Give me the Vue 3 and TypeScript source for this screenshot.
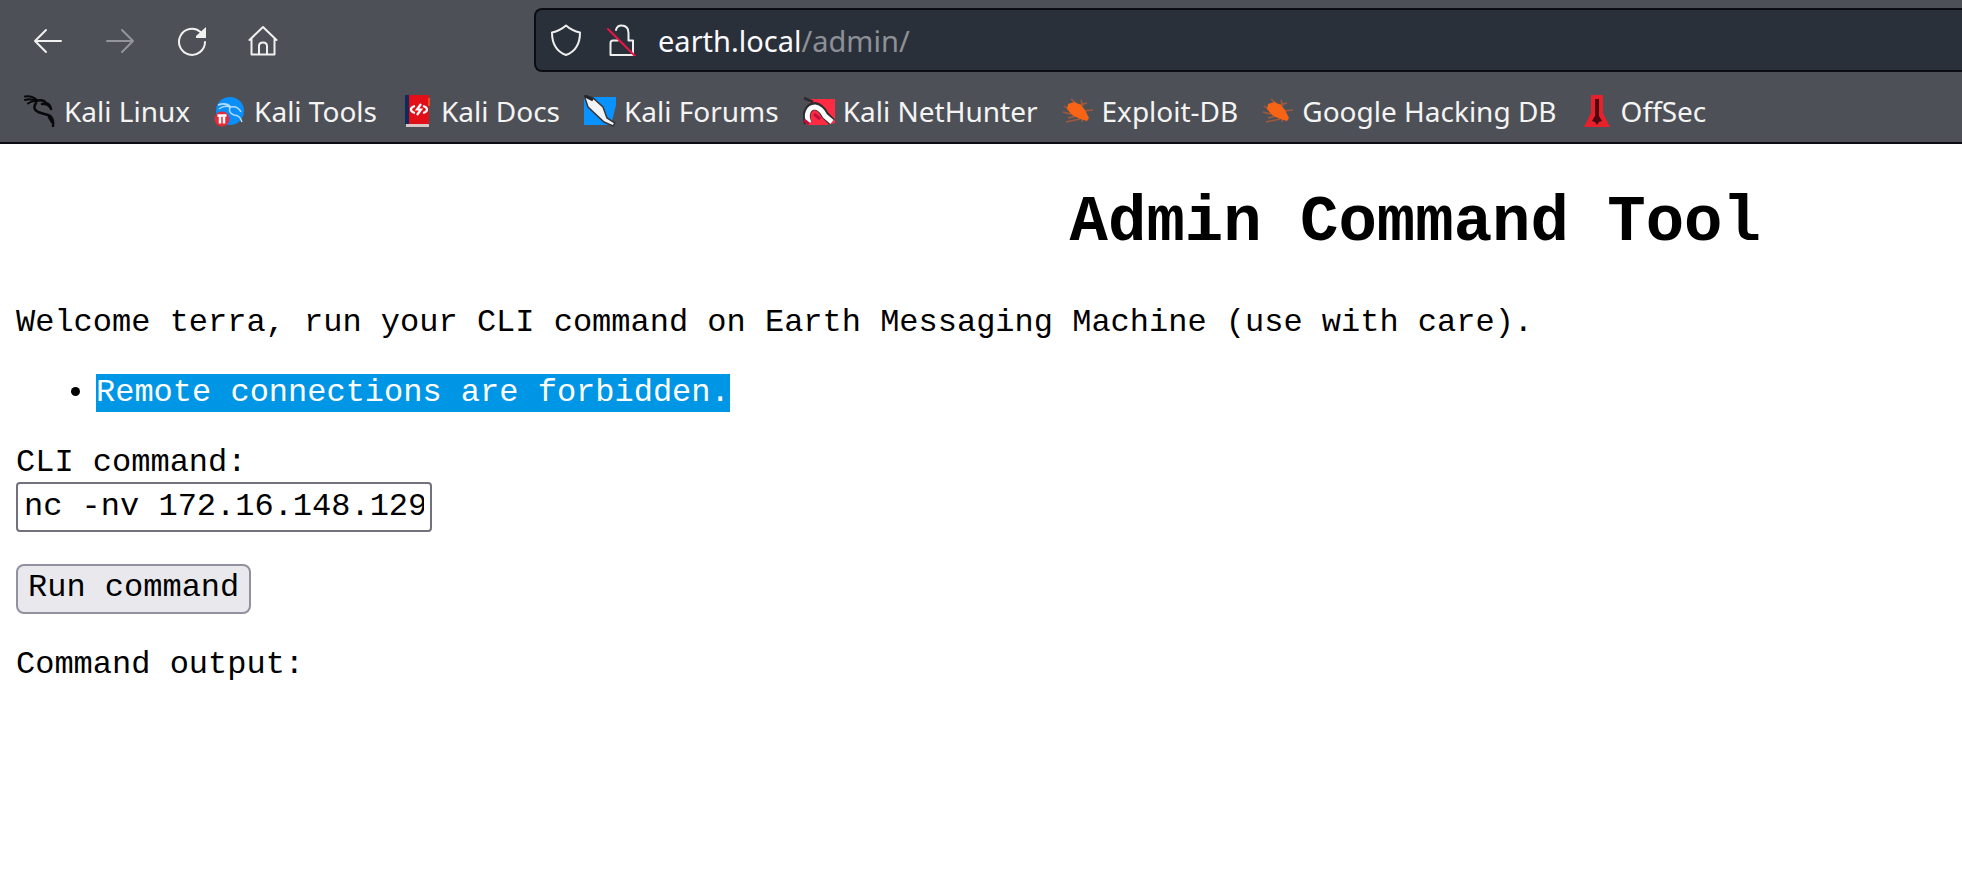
<script setup lang="ts">
import { ref } from 'vue'

interface Bookmark {
  label: string
  icon: string
}

const bookmarks: Bookmark[] = [
  { label: 'Kali Linux', icon: 'linux' },
  { label: 'Kali Tools', icon: 'tools' },
  { label: 'Kali Docs', icon: 'docs' },
  { label: 'Kali Forums', icon: 'forums' },
  { label: 'Kali NetHunter', icon: 'nethunter' },
  { label: 'Exploit-DB', icon: 'bug' },
  { label: 'Google Hacking DB', icon: 'bug' },
  { label: 'OffSec', icon: 'offsec' },
]

const command = ref('nc -nv 172.16.148.129')
</script>

<template>
  <div class="browser">
    <header class="chrome">
      <div class="toolbar">
        <nav class="controls" aria-label="Navigation">
          <button type="button" class="tool" aria-label="Back">
            <svg viewBox="0 0 32 32"><path d="M29 16H3M14 5L3 16l11 11" /></svg>
          </button>
          <button type="button" class="tool" aria-label="Forward" disabled>
            <svg viewBox="0 0 32 32"><path d="M3 16h26M18 5l11 11-11 11" /></svg>
          </button>
          <button type="button" class="tool" aria-label="Reload">
            <svg viewBox="0 0 32 32"><path d="M29 17A13 13 0 1 1 24.500 7" /><path class="solid" d="M30 2v11H20V11z" /></svg>
          </button>
          <button type="button" class="tool" aria-label="Home">
            <svg viewBox="0 0 32 32"><path d="M1.500 15L15 2l13.500 13M3.500 13.500v16h23v-16M11 29v-8q0-3.500 4-3.500t4 3.500v8" /></svg>
          </button>
        </nav>
        <div class="address">
          <div class="statuses">
            <svg class="status" viewBox="0 0 32 32"><path d="M16 1.500C12 5 7 7.500 2 8.500 2 18 5 27 16 31 27 27 30 18 30 8.500 25 7.500 20 5 16 1.500z" /></svg>
            <svg class="status" viewBox="0 0 32 32"><path d="M10 6Q11 1.500 15.500 1.500 22.500 1.500 22.500 9v7.500H27V31H4.500V19q0-2.500 2.500-2.500h5" /><path class="slash" d="M2 5l27 27" /></svg>
          </div>
          <a class="url" href="#"><span class="host">earth.local</span>/admin/</a>
        </div>
      </div>
      <nav class="bookmarks" aria-label="Bookmarks">
        <a v-for="item in bookmarks" :key="item.label" class="bookmark" href="#">
          <svg v-if="item.icon === 'linux'" viewBox="0 0 32 32">
            <g fill="none" stroke="#08090b" stroke-linecap="round">
              <path stroke-width="2" d="M1 1.500q7-1 12 3.500M1 5q6-2 11 1M4 8.500q4-3 8-2.500" />
              <path stroke-width="2.500" d="M12 6q7-2 10 2 4 1 5 6M18 9q5-1 8 3" />
              <path stroke-width="2.500" d="M12 8Q8 14 14 17q6 2 10 3 6 2 5 11M25 22l3 5" />
            </g>
          </svg>
          <svg v-else-if="item.icon === 'tools'" viewBox="0 0 32 32">
            <circle cx="16" cy="16" r="14" fill="#0a8ff8" />
            <path d="M4 10q8-3 13 2 7-1 10 5M5 14q5-4 11-2-2 6 4 8 6 0 8 7" fill="none" stroke="#b4dcff" stroke-width="1.500" />
            <circle cx="8" cy="24" r="7.500" fill="#e62a3a" />
            <path d="M3.500 20.500h9M6 21v7.500M10 21v7.500" fill="none" stroke="#fff" stroke-width="2.500" />
          </svg>
          <svg v-else-if="item.icon === 'docs'" viewBox="0 0 32 32">
            <path fill="#102a60" d="M4 0h5v29H4z" />
            <path fill="#e20f18" d="M8 0h20v29H8z" />
            <path fill="#f04a20" d="M27 3h2v8h-2z" />
            <path fill="#d8c8c8" d="M5 29h23v3H5z" />
            <path d="M14 11q-4 1-4 3.500t4 3.500M22 11q4 1 4 3.500T22 18M20 9l-4 5.500h4L16 20" fill="none" stroke="#fff" stroke-width="2.200" />
          </svg>
          <svg v-else-if="item.icon === 'forums'" viewBox="0 0 32 32">
            <path fill="#0a93ff" d="M0 2h32v8l-5 20H0z" />
            <path d="M0 0l9 3 10 9 4 11 8 5-2 3-9-4L4 12z" fill="#f4f4f4" stroke="#33363d" stroke-width="1.500" />
            <path d="M1 1l8 4" stroke="#22242a" stroke-width="3" />
          </svg>
          <svg v-else-if="item.icon === 'nethunter'" viewBox="0 0 32 32">
            <path fill="#ff2b43" d="M8 4h24v24l-8 2H4L1 20z" />
            <path d="M5 28C1 19 6 11 12 11q6 1 10 9l7 7" fill="none" stroke="#2c2d33" stroke-width="8" />
            <path d="M6 28C2 19 6 12 12 12q6 1 10 9l7 6" fill="none" stroke="#fff" stroke-width="5" />
            <path d="M1 3l9 4" stroke="#2c2d33" stroke-width="3" />
            <path d="M11 19l6 5M1 25l5 4" stroke="#c0103c" stroke-width="3" />
          </svg>
          <svg v-else-if="item.icon === 'bug'" viewBox="0 0 32 32">
            <path d="M9 4l7 6M19 5l2 6M2 11l6 4M1 17l8 2M6 23l8-2M4 27l14-3M20 27l1-4M31 15l-9 1M25 8l-8 2" stroke="#a3593a" stroke-width="1.500" />
            <path fill="#f76415" d="M6 9l6-2 7 3 4 5 4 8-2 3-7-2-8-4-5-6z" />
          </svg>
          <svg v-else viewBox="0 0 32 32">
            <path fill="#e8202c" d="M10 0h12v18l7 14H3l7-14z" />
            <path fill="#4a0810" d="M14 4h4v17l3 5-3 1-2 3-2-3-3-1 3-5z" />
          </svg>
          <span>{{ item.label }}</span>
        </a>
      </nav>
    </header>

    <main class="page">
      <h1>Admin Command Tool</h1>
      <p>Welcome terra, run your CLI command on Earth Messaging Machine (use with care).</p>
      <ul>
        <li><mark>Remote connections are forbidden.</mark></li>
      </ul>
      <form @submit.prevent>
        <label for="command">CLI command:</label>
        <input id="command" v-model="command" type="text" />
        <button type="submit">Run command</button>
      </form>
      <p>Command output:</p>
    </main>
  </div>
</template>

<style>
body {
  margin: 0;
  background: #fff;
}
</style>

<style scoped>
.browser {
  overflow: hidden;
}

.chrome {
  background: #4e5058;
  border-bottom: 2px solid #0c0c13;
  color: #f4f4f2;
  font-family: "Noto Sans", sans-serif;
}

.toolbar {
  display: flex;
  align-items: center;
  padding: 8px 0 0 32px;
}

.controls {
  display: flex;
  gap: 40px;
  flex: 0 0 502px;
  padding-top: 2px;
}

.tool {
  width: 32px;
  height: 32px;
  padding: 0;
  border: 0;
  background: none;
  color: #f0f0ee;
}

.tool:disabled {
  color: #94959a;
}

.tool svg,
.status {
  display: block;
  width: 32px;
  height: 32px;
  fill: none;
  stroke: currentColor;
  stroke-width: 2;
  stroke-linecap: round;
  stroke-linejoin: round;
}

.tool .solid {
  fill: currentColor;
  stroke: none;
}

.address {
  display: flex;
  align-items: center;
  flex: 1;
  gap: 20px;
  height: 60px;
  padding-left: 14px;
  border: 2px solid #0c0d12;
  border-right: 0;
  border-radius: 8px 0 0 8px;
  background: #2a303a;
}

.statuses {
  display: flex;
  gap: 24px;
}

.status {
  color: #eeeeec;
}

.status .slash {
  stroke: #f01446;
}

.url {
  padding-top: 2px;
  color: #8d9096;
  font-size: 29px;
  line-height: 40px;
  text-decoration: none;
}

.host {
  color: #fbfbfe;
}

.bookmarks {
  display: flex;
  gap: 24px;
  padding: 19px 24px 11px;
}

.bookmark {
  display: flex;
  align-items: center;
  gap: 8px;
  color: inherit;
  font-size: 28px;
  line-height: 40px;
  text-decoration: none;
  white-space: nowrap;
}

.bookmark svg {
  width: 32px;
  height: 32px;
}

.page {
  padding: 42px 16px 32px;
  color: #000;
  font-family: "Liberation Mono", monospace;
  font-size: 32px;
  line-height: 38px;
}

h1 {
  margin: 0 0 44px 45%;
  font-size: 64px;
  line-height: 74px;
  text-align: center;
}

p {
  margin: 0;
}

ul {
  margin: 32px 0;
  padding-left: 80px;
}

mark {
  display: inline-block;
  background: #0096e6;
  color: #fff;
}

form {
  display: flex;
  flex-direction: column;
  align-items: flex-start;
  margin-bottom: 32px;
}

input,
form button {
  box-sizing: border-box;
  height: 50px;
  color: #000;
  font: inherit;
}

input {
  width: 416px;
  margin-bottom: 32px;
  padding: 0 6px 2px;
  border: 2px solid #71717e;
  border-radius: 4px;
  background: #fff;
}

form button {
  padding: 0 10px 2px;
  border: 2px solid #9191a0;
  border-radius: 8px;
  background: #e9e9ed;
}
</style>
